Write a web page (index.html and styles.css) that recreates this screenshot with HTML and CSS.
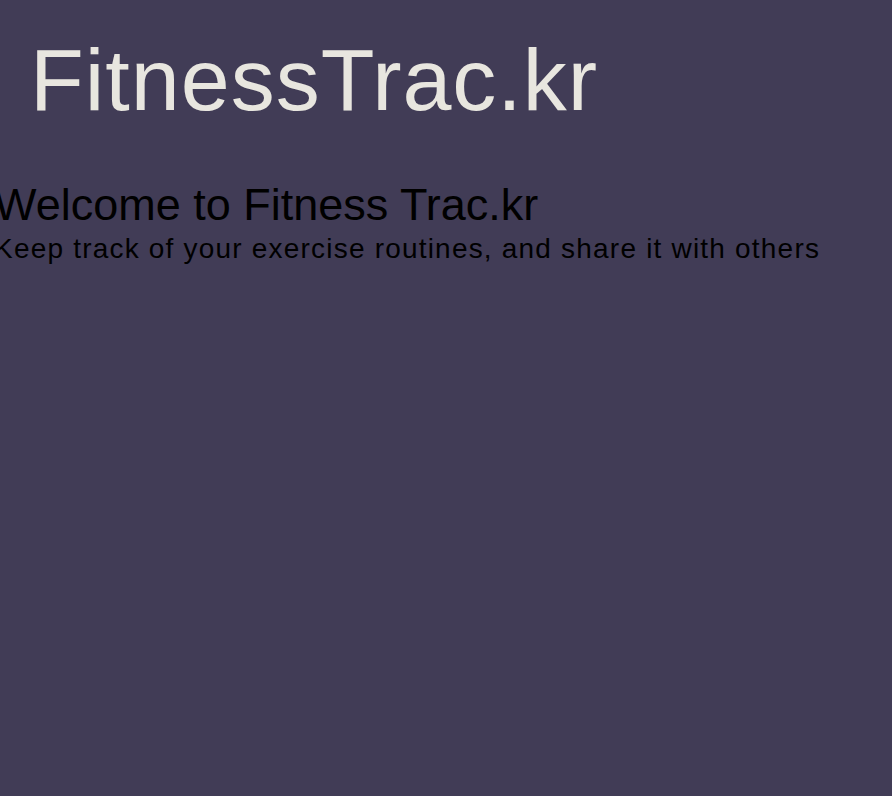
FILE: index.html
```html
<!DOCTYPE html>
<html>
<head>
<meta charset="utf-8">
<link rel="stylesheet" href="styles.css">
</head>
<body>
<header class="site-header">
  <h1 class="brand">FitnessTrac.kr</h1>
</header>
<main class="home">
  <h2 class="home-title">Welcome to Fitness Trac.kr</h2>
  <p class="home-sub">Keep track of your exercise routines, and share it with others</p>
</main>
</body>
</html>
```
FILE: styles.css
```css
html, body {
  margin: 0;
  padding: 0;
  background: #413c56;
  min-height: 100%;
}
body {
  font-family: "Liberation Sans", Arial, sans-serif;
  overflow: hidden;
}
.site-header {
  padding: 30px 0 0 30px;
}
.brand {
  margin: 0;
  font-size: 88px;
  font-weight: 400;
  line-height: 100px;
  color: #e8e6df;
  letter-spacing: 1px;
}
.home {
  margin-left: -6px;
  padding-top: 49px;
}
.home-title {
  margin: 0;
  font-size: 45px;
  font-weight: 400;
  line-height: 52px;
  color: #000;
}
.home-sub {
  margin: 0;
  font-size: 28px;
  line-height: 36px;
  letter-spacing: 1.2px;
  color: #000;
}
```
